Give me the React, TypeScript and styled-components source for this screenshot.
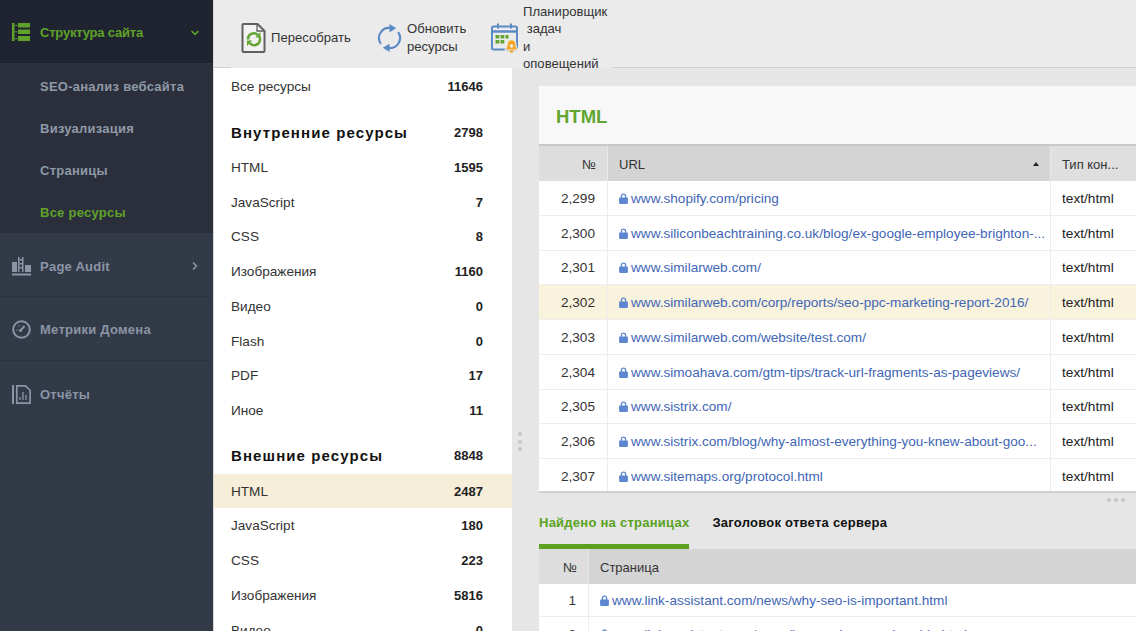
import React from 'react';
import styled, { createGlobalStyle } from 'styled-components';
import { ChevronDown, ChevronRight } from 'lucide-react';

const Global = createGlobalStyle`
  html, body { margin: 0; padding: 0; height: 100%; overflow: hidden; background: #e6e6e6; }
  #root { height: 100%; }
  * { box-sizing: border-box; }
`;

const Page = styled.div`
  display: flex;
  width: 1136px;
  height: 631px;
  overflow: hidden;
  font-family: "Liberation Sans", Arial, sans-serif;
  font-size: 14px;
  color: #222;
`;

const Sidebar = styled.nav`
  flex: 0 0 213px;
  display: flex;
  flex-direction: column;
  background: #333a47;
  font-weight: 700;
  font-size: 13px;
  letter-spacing: 0.25px;
`;

const TopSection = styled.div`
  height: 64px;
  flex: none;
  background: #1f2430;
  border-bottom: 1px dotted #3a404c;
  display: flex;
  align-items: center;
  padding: 2px 12px 0;
  color: #5fa22a;
  letter-spacing: -0.2px;
`;

const SubList = styled.div`
  height: 170px;
  flex: none;
  background: #2a2f3b;
  padding-top: 1px;
  display: flex;
  flex-direction: column;
  border-bottom: 1px dotted #3f4552;
`;

const SubItem = styled.div<{ $active?: boolean }>`
  height: 42px;
  display: flex;
  align-items: center;
  padding-left: 40px;
  color: ${p => (p.$active ? '#5fa22a' : '#8f99a8')};
`;

const NavItem = styled.div<{ $h: number }>`
  height: ${p => p.$h}px;
  flex: none;
  display: flex;
  align-items: center;
  padding: 2px 12px 0;
  color: #8a95a5;
  border-bottom: 1px solid #2d333f;
  &:last-child { border-bottom: 0; }
`;

const NavIcon = styled.svg`
  flex: 0 0 19px;
  width: 19px;
  height: 19px;
  margin-right: 9px;
`;

const NavLabel = styled.span`
  flex: 1;
  white-space: nowrap;
`;

const Caret = styled.span`
  display: flex;
  width: 14px;
  justify-content: center;
  padding-left: 1px;
`;

const Main = styled.div`
  flex: 1;
  min-width: 0;
  display: flex;
  flex-direction: column;
  border-left: 1px solid #d9d9d9;
`;

const Toolbar = styled.header`
  position: relative;
  z-index: 2;
  height: 68px;
  flex: 0 0 68px;
  display: flex;
  align-items: stretch;
  background: #ebebeb;
  border-bottom: 1px solid #cfcfcf;
  padding-left: 17px;
  font-size: 13.1px;
  line-height: 17.5px;
  color: #333;
`;

const ToolGroup = styled.div`
  width: 381px;
  flex: none;
  margin-bottom: -1px;
  padding: 7px 0 0 10px;
  background: #ebebeb;
  display: flex;
  align-items: center;
`;

const ToolButton = styled.div<{ $w: number }>`
  display: flex;
  align-items: center;
  width: ${p => p.$w}px;
  gap: 4px;
  flex: none;
`;

const ToolText = styled.div`
  white-space: pre-wrap;
`;

const Body = styled.div`
  flex: 1;
  min-height: 0;
  display: flex;
`;

const Resources = styled.aside`
  flex: 0 0 298px;
  background: #fff;
  overflow: hidden;
  padding-top: 1.5px;
`;

const ResRow = styled.div<{ $head?: boolean; $active?: boolean }>`
  height: ${p => (p.$head ? 45.7 : 34.75)}px;
  padding: ${p => (p.$head ? '10px' : '0')} 29px 0 17px;
  display: flex;
  align-items: center;
  justify-content: space-between;
  background: ${p => (p.$active ? '#f6eed9' : 'transparent')};
  font-size: ${p => (p.$head ? 15 : 13.6)}px;
  font-weight: ${p => (p.$head ? 700 : 400)};
  letter-spacing: ${p => (p.$head ? '1.1px' : '0')};
  color: ${p => (p.$head ? '#111' : '#333')};
`;

const ResCount = styled.span`
  font-weight: 700;
  font-size: 13px;
  letter-spacing: 0;
  color: #222;
`;

const Splitter = styled.div`
  flex: 0 0 27px;
  display: flex;
  flex-direction: column;
  align-items: flex-start;
  gap: 3.5px;
  padding: 364px 0 0 6px;
`;

const Dot = styled.span`
  width: 4px;
  height: 4px;
  border-radius: 50%;
  background: #c6c6c6;
`;

const Content = styled.main`
  flex: 1;
  min-width: 0;
  display: flex;
  flex-direction: column;
  padding-top: 18px;
`;

const TitleBar = styled.div`
  height: 60px;
  flex: none;
  background: #f8f8f8;
  border-bottom: 2px solid #c9c9c9;
  display: flex;
  align-items: center;
  padding: 3px 0 0 17px;
  font-size: 18.5px;
  font-weight: 700;
  color: #62a531;
`;

const Table = styled.div`
  background: #fff;
  flex: none;
`;

const MainTable = styled(Table)`
  height: 347px;
  overflow: hidden;
  border-bottom: 2px solid #cfcfcf;
`;

const Grid = styled.div<{ $cols: string; $h: number; $hl?: boolean }>`
  display: grid;
  grid-template-columns: ${p => p.$cols};
  height: ${p => p.$h}px;
  background: ${p => (p.$hl ? '#f9f2dd' : 'transparent')};
`;

const HeadCell = styled.div<{ $kind?: 'num' | 'sorted' | 'plain' }>`
  display: flex;
  align-items: center;
  justify-content: ${p => (p.$kind === 'num' ? 'flex-end' : 'space-between')};
  padding: ${p => (p.$kind === 'num' ? '1px 11px 0 0' : '1px 12px 0 11px')};
  background: ${p => (p.$kind === 'plain' ? '#dfdfdf' : p.$kind === 'num' ? '#dddddd' : '#d4d4d4')};
  border-left: ${p => (p.$kind === 'num' ? '0' : '1px solid #e9e9e9')};
  font-size: 13px;
  color: #333;
  white-space: nowrap;
  overflow: hidden;
`;

const SortMark = styled.span`
  width: 0;
  height: 0;
  border-left: 3.5px solid transparent;
  border-right: 3.5px solid transparent;
  border-bottom: 4px solid #222;
  margin-right: -1px;
`;

const NumCell = styled.div`
  display: flex;
  align-items: center;
  justify-content: flex-end;
  padding: 1px 12px 0 0;
  border-bottom: 1px solid #ededed;
  font-size: 13.6px;
  color: #333;
`;

const UrlCell = styled.div`
  display: flex;
  align-items: center;
  min-width: 0;
  padding: 1px 0 0 11px;
  border-left: 1px solid #ededed;
  border-bottom: 1px solid #ededed;
  font-size: 13.6px;
  color: #3f66b5;
`;

const UrlText = styled.span`
  white-space: nowrap;
`;

const Lock = styled.svg`
  flex: 0 0 9px;
  width: 9px;
  height: 11px;
  margin-right: 3px;
`;

const TypeCell = styled.div`
  display: flex;
  align-items: center;
  padding: 1px 0 0 11px;
  border-left: 1px solid #ededed;
  border-bottom: 1px solid #ededed;
  font-size: 13.7px;
  color: #222;
`;

const HDots = styled.div`
  height: 14px;
  flex: none;
  display: flex;
  justify-content: flex-end;
  align-items: center;
  gap: 3px;
  padding: 0 11px 0 0;
`;

const Tabs = styled.div`
  display: flex;
  flex: none;
  height: 42px;
  font-size: 13px;
  font-weight: 700;
  letter-spacing: 0.25px;
`;

const Tab = styled.div<{ $active?: boolean }>`
  display: flex;
  align-items: center;
  padding-bottom: 6px;
  margin-right: 23px;
  border-bottom: 5px solid ${p => (p.$active ? '#5aa11f' : 'transparent')};
  color: ${p => (p.$active ? '#5aa11f' : '#111')};
`;

const lock = (
  <Lock viewBox="0 0 8 10">
    <path d="M1.500 4V3a2.500 2.500 0 0 1 5 0v1h.7c.4 0 .8.4.8.8v4.400c0 .4-.4.8-.8.8H.8C.4 10 0 9.600 0 9.200V4.800C0 4.400.4 4 .8 4zM2.700 4h2.600V3a1.300 1.300 0 0 0-2.600 0z" fill="#5c86cf" fillRule="evenodd" />
  </Lock>
);

const resources: [string, string, boolean?][] = [
  ['HTML', '1595'], ['JavaScript', '7'], ['CSS', '8'], ['Изображения', '1160'],
  ['Видео', '0'], ['Flash', '0'], ['PDF', '17'], ['Иное', '11'],
];
const external: [string, string, boolean?][] = [
  ['HTML', '2487', true], ['JavaScript', '180'], ['CSS', '223'], ['Изображения', '5816'], ['Видео', '0'],
];

const rows: [string, string][] = [
  ['2,299', 'www.shopify.com/pricing'],
  ['2,300', 'www.siliconbeachtraining.co.uk/blog/ex-google-employee-brighton-...'],
  ['2,301', 'www.similarweb.com/'],
  ['2,302', 'www.similarweb.com/corp/reports/seo-ppc-marketing-report-2016/'],
  ['2,303', 'www.similarweb.com/website/test.com/'],
  ['2,304', 'www.simoahava.com/gtm-tips/track-url-fragments-as-pageviews/'],
  ['2,305', 'www.sistrix.com/'],
  ['2,306', 'www.sistrix.com/blog/why-almost-everything-you-knew-about-goo...'],
  ['2,307', 'www.sitemaps.org/protocol.html'],
];

const MAIN_COLS = '68px 443px 86px';
const SUB_COLS = '49px 548px';

export default function App() {
  return (
    <Page>
      <Global />
      <Sidebar>
        <TopSection>
          <NavIcon viewBox="0 0 19 19">
            <g fill="#5fa22a">
              <rect x="0" y="0" width="2.500" height="18" />
              <rect x="6" y="0" width="12" height="4.500" />
              <rect x="6" y="6.500" width="12" height="4.500" />
              <rect x="6" y="13" width="12" height="5" />
              <rect x="3.200" y="1.800" width="2" height="1.200" />
              <rect x="3.200" y="8.200" width="2" height="1.200" />
              <rect x="3.200" y="15" width="2" height="1.200" />
            </g>
          </NavIcon>
          <NavLabel>Структура сайта</NavLabel>
          <Caret><ChevronDown size={12} strokeWidth={3.500} color="#5fa22a" /></Caret>
        </TopSection>
        <SubList>
          <SubItem>SEO-анализ вебсайта</SubItem>
          <SubItem>Визуализация</SubItem>
          <SubItem>Страницы</SubItem>
          <SubItem $active>Все ресурсы</SubItem>
        </SubList>
        <NavItem $h={63}>
          <NavIcon viewBox="0 0 19 19">
            <g fill="#8a95a5">
              <rect x="0" y="5" width="5" height="10" />
              <rect x="6" y="0" width="1.500" height="15" />
              <rect x="10" y="0" width="1.500" height="15" />
              <rect x="7.500" y="2" width="2.500" height="1.500" />
              <rect x="7.500" y="6" width="2.500" height="1.500" />
              <rect x="7.500" y="10" width="2.500" height="1.500" />
              <rect x="13" y="8" width="6" height="7" />
              <rect x="0" y="16.500" width="19" height="2" />
            </g>
          </NavIcon>
          <NavLabel>Page Audit</NavLabel>
          <Caret><ChevronRight size={12} strokeWidth={3.500} color="#8a95a5" /></Caret>
        </NavItem>
        <NavItem $h={64}>
          <NavIcon viewBox="0 0 19 19">
            <circle cx="9.500" cy="9.500" r="8.300" fill="none" stroke="#8a95a5" strokeWidth="2" />
            <path d="M8.500 10.500l4-4.500" stroke="#8a95a5" strokeWidth="2" fill="none" />
            <circle cx="8.500" cy="10.500" r="1.500" fill="#8a95a5" />
            <path d="M4.500 10h1.500M6.500 5.500l.8.8" stroke="#8a95a5" strokeWidth="1.200" />
          </NavIcon>
          <NavLabel>Метрики Домена</NavLabel>
        </NavItem>
        <NavItem $h={65}>
          <NavIcon viewBox="0 0 19 19">
            <rect x="0" y="0" width="2" height="19" rx="0.500" fill="#8a95a5" />
            <path d="M4.800.9h8.700l4.600 4.600v12.600H4.800z" fill="none" stroke="#8a95a5" strokeWidth="1.700" />
            <path d="M8 15v-3M11 15V7M14 15v-5" stroke="#8a95a5" strokeWidth="1.300" />
          </NavIcon>
          <NavLabel>Отчёты</NavLabel>
        </NavItem>
      </Sidebar>

      <Main>
        <Toolbar>
          <ToolGroup>
            <ToolButton $w={135}>
              <svg width="26" height="30" viewBox="0 0 26 30">
                <path d="M2.500 1h14l7 7v20a1 1 0 0 1-1 1h-20a1 1 0 0 1-1-1V2a1 1 0 0 1 1-1z" fill="#f2f2f2" stroke="#5f5f5f" strokeWidth="2" />
                <path d="M16 1.500v6.500h7" fill="none" stroke="#5f5f5f" strokeWidth="1.300" />
                <path d="M7 16.500a5.800 5.800 0 0 1 9.800-4.500" fill="none" stroke="#62a531" strokeWidth="2.600" />
                <path d="M14.300 14.500h5.200V9z" fill="#62a531" />
                <path d="M18.500 14a5.800 5.800 0 0 1-9.800 6" fill="none" stroke="#62a531" strokeWidth="2.600" />
                <path d="M11.200 17.500H6v5.500z" fill="#62a531" />
              </svg>
              <ToolText>Пересобрать</ToolText>
            </ToolButton>
            <ToolButton $w={115}>
              <svg width="27" height="30" viewBox="0 0 28 30">
                <path d="M5 21A10.500 10.500 0 0 1 15 4.600" fill="none" stroke="#5b8ac6" strokeWidth="2.200" />
                <path d="M23 9A10.500 10.500 0 0 1 13 25.400" fill="none" stroke="#5b8ac6" strokeWidth="2.200" />
                <path d="M14 .5l7 4.500-7 4z" fill="#5b8ac6" />
                <path d="M14 29.500L7 25l7-4z" fill="#5b8ac6" />
              </svg>
              <ToolText>{'Обновить\nресурсы'}</ToolText>
            </ToolButton>
            <ToolButton $w={121}>
              <svg width="28" height="30" viewBox="0 0 28 30">
                <rect x="1" y="3.500" width="25" height="23" rx="1.500" fill="none" stroke="#5b8ac6" strokeWidth="2" />
                <path d="M1 8.500h25" stroke="#5b8ac6" strokeWidth="2.500" />
                <path d="M7 .5v5M20 .5v5" stroke="#5b8ac6" strokeWidth="2" />
                <g fill="#62a531">
                  <rect x="4.500" y="12" width="3.800" height="3.500" /><rect x="9.500" y="12" width="3.800" height="3.500" /><rect x="14.500" y="12" width="3" height="3.500" />
                  <rect x="4.500" y="17" width="3.800" height="3.500" /><rect x="9.500" y="17" width="3.800" height="3.500" />
                </g>
                <path d="M13.500 27c2.500-1 2.500-4.500 2.800-7a4.300 4.300 0 0 1 8.400 0c.3 2.500.3 6 2.800 7z" fill="#f5a623" stroke="#ebebeb" strokeWidth="1.200" />
                <path d="M18.300 27.500a2.200 2.200 0 0 0 4.400 0z" fill="#f5a623" />
                <circle cx="20.500" cy="23" r="1.800" fill="#ebebeb" />
              </svg>
              <ToolText>{'Планировщик\n задач\nи\nоповещений'}</ToolText>
            </ToolButton>
          </ToolGroup>
        </Toolbar>
        <Body>
          <Resources>
            <ResRow><span>Все ресурсы</span><ResCount>11646</ResCount></ResRow>
            <ResRow $head><span>Внутренние ресурсы</span><ResCount>2798</ResCount></ResRow>
            {resources.map(([n, c]) => (
              <ResRow key={n}><span>{n}</span><ResCount>{c}</ResCount></ResRow>
            ))}
            <ResRow $head><span>Внешние ресурсы</span><ResCount>8848</ResCount></ResRow>
            {external.map(([n, c, a]) => (
              <ResRow key={n} $active={a}><span>{n}</span><ResCount>{c}</ResCount></ResRow>
            ))}
          </Resources>
          <Splitter><Dot /><Dot /><Dot /></Splitter>
          <Content>
            <TitleBar>HTML</TitleBar>
            <MainTable>
              <Grid $cols={MAIN_COLS} $h={35}>
                <HeadCell $kind="num">№</HeadCell>
                <HeadCell $kind="sorted">URL<SortMark /></HeadCell>
                <HeadCell $kind="plain">Тип кон...</HeadCell>
              </Grid>
              {rows.map(([n, u], i) => (
                <Grid key={n} $cols={MAIN_COLS} $h={34.75} $hl={i === 3}>
                  <NumCell>{n}</NumCell>
                  <UrlCell>{lock}<UrlText>{u}</UrlText></UrlCell>
                  <TypeCell>text/html</TypeCell>
                </Grid>
              ))}
            </MainTable>
            <HDots><Dot /><Dot /><Dot /></HDots>
            <Tabs>
              <Tab $active>Найдено на страницах</Tab>
              <Tab>Заголовок ответа сервера</Tab>
            </Tabs>
            <Table>
              <Grid $cols={SUB_COLS} $h={35}>
                <HeadCell $kind="num">№</HeadCell>
                <HeadCell $kind="sorted">Страница</HeadCell>
              </Grid>
              <Grid $cols={SUB_COLS} $h={33}>
                <NumCell>1</NumCell>
                <UrlCell>{lock}<UrlText>www.link-assistant.com/news/why-seo-is-important.html</UrlText></UrlCell>
              </Grid>
              <Grid $cols={SUB_COLS} $h={34.75}>
                <NumCell>2</NumCell>
                <UrlCell>{lock}<UrlText>www.link-assistant.com/news/keyword-research-guide.html</UrlText></UrlCell>
              </Grid>
            </Table>
          </Content>
        </Body>
      </Main>
    </Page>
  );
}
